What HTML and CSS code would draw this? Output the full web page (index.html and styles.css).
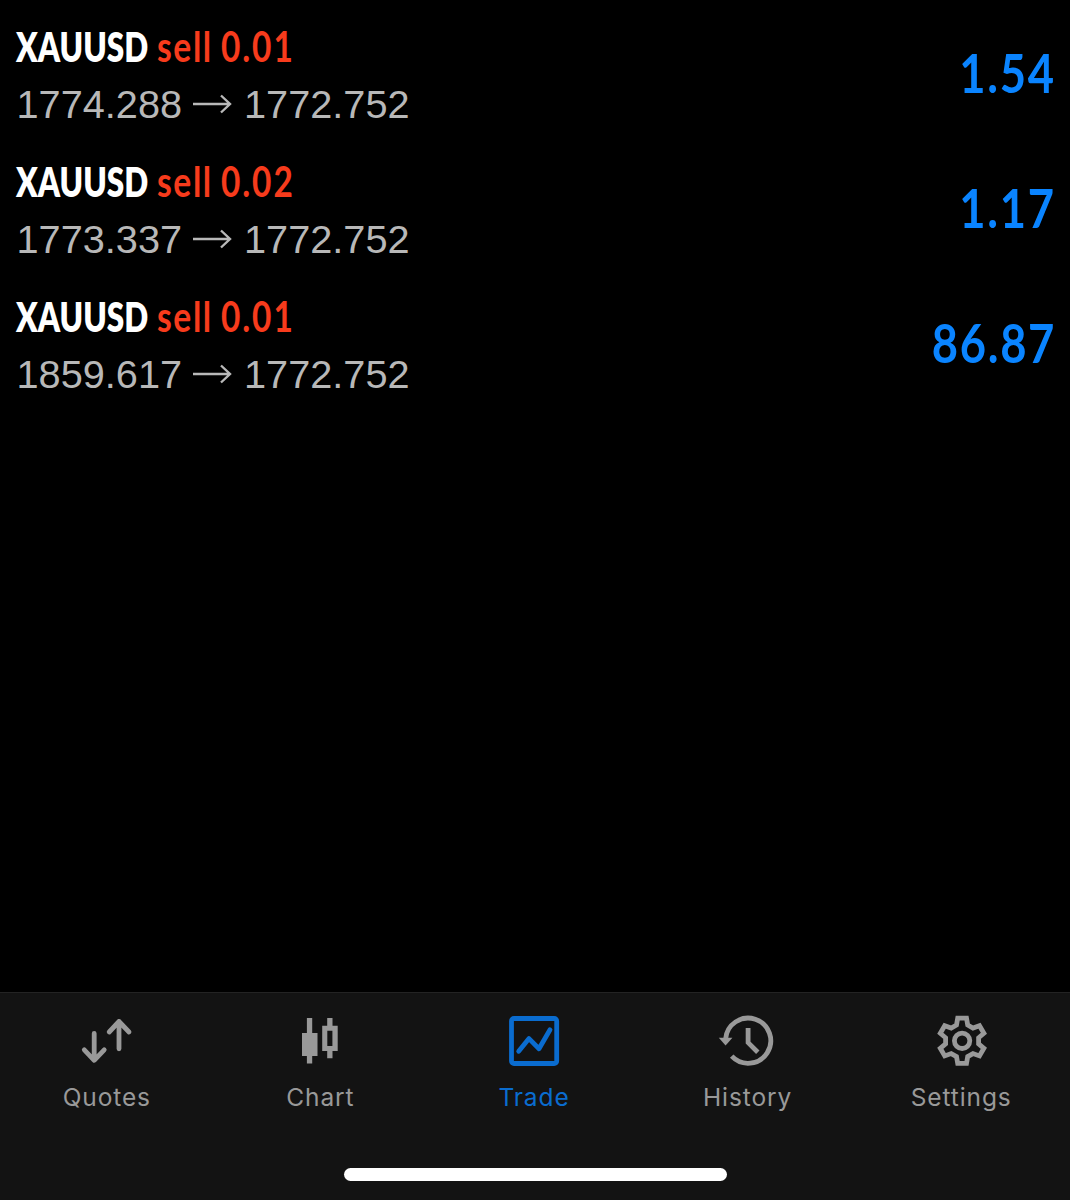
FILE: index.html
```
<!DOCTYPE html>
<html lang="en">

<head>
    <meta charset="UTF-8">
    <meta name="viewport" content="width=device-width, initial-scale=1.0">
    <title>Trade</title>
    <link rel="stylesheet" href="styles.css">
</head>

<body>
    <!-- Open Positions -->
    <main class="positions">
        <div class="position">
            <div class="position-info">
                <div class="order"><span class="symbol">XAUUSD</span><span class="side">sell</span><span class="volume">0.01</span></div>
                <div class="prices">
                    <span>1774.288</span>
                    <svg class="arrow" viewBox="0 0 40 20"><path d="M1 10H38M29 1.5L38 10L29 18.5"/></svg>
                    <span>1772.752</span>
                </div>
            </div>
            <div class="profit">1.54</div>
        </div>
        <div class="position">
            <div class="position-info">
                <div class="order"><span class="symbol">XAUUSD</span><span class="side">sell</span><span class="volume">0.02</span></div>
                <div class="prices">
                    <span>1773.337</span>
                    <svg class="arrow" viewBox="0 0 40 20"><path d="M1 10H38M29 1.5L38 10L29 18.5"/></svg>
                    <span>1772.752</span>
                </div>
            </div>
            <div class="profit">1.17</div>
        </div>
        <div class="position">
            <div class="position-info">
                <div class="order"><span class="symbol">XAUUSD</span><span class="side">sell</span><span class="volume">0.01</span></div>
                <div class="prices">
                    <span>1859.617</span>
                    <svg class="arrow" viewBox="0 0 40 20"><path d="M1 10H38M29 1.5L38 10L29 18.5"/></svg>
                    <span>1772.752</span>
                </div>
            </div>
            <div class="profit">86.87</div>
        </div>
    </main>

    <!-- Bottom Tab Bar -->
    <footer class="tab-bar">
        <nav class="tabs">
            <a class="tab">
                <svg class="icon" viewBox="0 0 60 60">
                    <path class="round" d="M17.2 23.4V50.3M7.3 39.8L17.2 50.3L27.2 39.8M42 38.8V11.5M32.2 22L42 11.5L52 22"/>
                </svg>
                <span>Quotes</span>
            </a>
            <a class="tab">
                <svg class="icon solid" viewBox="0 0 60 60">
                    <path d="M16.9 8H22.2V23H27.5V46H22.2V53.5H16.9V46H12V23H16.9Z"/>
                    <path fill-rule="evenodd" d="M37.2 8H42.5V15.7H47.7V41H42.5V48.3H37.2V41H32.2V15.7H37.2ZM37.3 20.7V36H42.4V20.7Z"/>
                </svg>
                <span>Chart</span>
            </a>
            <a class="tab active">
                <svg class="icon" viewBox="0 0 60 60">
                    <rect x="7.5" y="8.5" width="45.2" height="45" rx="2.5"/>
                    <path class="round" d="M14.7 41.3L25 28.6L35 38.8L46 19.8"/>
                </svg>
                <span>Trade</span>
            </a>
            <a class="tab">
                <svg class="icon" viewBox="0 0 60 60">
                    <path d="M7.6 29A22.6 22.6 0 1 1 13.7 46.2M30.1 18V32.6L39.8 42.3"/>
                    <path class="head" d="M0.8 27.7H14.4L7.6 35.4Z"/>
                </svg>
                <span>History</span>
            </a>
            <a class="tab">
                <svg class="icon" viewBox="0 0 60 60">
                    <g transform="translate(31.1 30.8)">
                        <path d="M-4.4 -22.6H4.4L5.6 -15.8L10.9 -12.75L17.4 -15.1L21.8 -7.5L16.5 -3.05V3.05L21.8 7.5L17.4 15.1L10.9 12.75L5.6 15.8L4.4 22.6H-4.4L-5.6 15.8L-10.9 12.75L-17.4 15.1L-21.8 7.5L-16.5 3.05V-3.05L-21.8 -7.5L-17.4 -15.1L-10.9 -12.75L-5.6 -15.8Z"/>
                        <circle r="7.7"/>
                    </g>
                </svg>
                <span>Settings</span>
            </a>
        </nav>
        <div class="home-indicator"></div>
    </footer>
</body>

</html>
```

FILE: styles.css
```
/* General Styling */
body {
    margin: 0;
    height: 1200px;
    display: flex;
    flex-direction: column;
    background-color: #000;
    overflow: hidden;
}

/* Positions */
.positions {
    flex: 1;
}

.position {
    height: 135px;
    padding: 0 16px;
    box-sizing: border-box;
    display: flex;
    justify-content: space-between;
}

.position-info {
    padding-top: 20px;
}

.order {
    display: flex;
    height: 54px;
    line-height: 52px;
    font-family: Lato, sans-serif;
    font-size: 42px;
    font-weight: 800;
    color: #f73b1c;
}

.order span {
    white-space: nowrap;
    transform-origin: 0 50%;
    transform: scaleX(0.75);
}

.order .symbol {
    width: 141px;
    color: #fff;
}

.order .side {
    width: 64px;
    font-weight: 700;
    letter-spacing: 2px;
    transform: scaleX(0.8);
}

.order .volume {
    font-weight: 700;
    letter-spacing: 2.4px;
    transform: scaleX(0.795);
}

.prices {
    display: flex;
    align-items: center;
    height: 60px;
    padding-left: 0.5px;
    font-family: "Liberation Sans", Arial, sans-serif;
    font-size: 39.7px;
    color: #b8b8b8;
}

.arrow {
    width: 40px;
    height: 20px;
    margin: 0 12px 0 10px;
    fill: none;
    stroke: #b8b8b8;
    stroke-width: 2.4;
}

.profit {
    padding-top: 40px;
    line-height: 66px;
    font-family: Lato, sans-serif;
    font-size: 54px;
    font-weight: 700;
    letter-spacing: 2px;
    margin-right: -2px;
    color: #0a84ff;
    transform-origin: 100% 50%;
    transform: scaleX(0.84);
}

/* Tab Bar */
.tab-bar {
    height: 208px;
    box-sizing: border-box;
    border-top: 1px solid #232323;
    background-color: #131313;
}

.tabs {
    display: flex;
    height: 175px;
    padding-right: 2px;
}

.tab {
    flex: 1;
    padding-top: 17px;
    display: flex;
    flex-direction: column;
    align-items: center;
    font-family: Inter, sans-serif;
    font-size: 24.5px;
    line-height: 30px;
    letter-spacing: 0.9px;
    color: #999;
}

.tab span {
    margin-top: 11.5px;
}

.tab.active {
    color: #0a6ccf;
}

.icon {
    width: 60px;
    height: 60px;
    fill: none;
    stroke: currentColor;
    stroke-width: 4.8;
}

.icon .round {
    stroke-linecap: round;
    stroke-linejoin: round;
}

.icon.solid,
.icon .head {
    fill: currentColor;
    stroke: none;
}

.home-indicator {
    width: 383px;
    height: 13px;
    margin-left: 344px;
    border-radius: 7px;
    background-color: #fff;
}
```
